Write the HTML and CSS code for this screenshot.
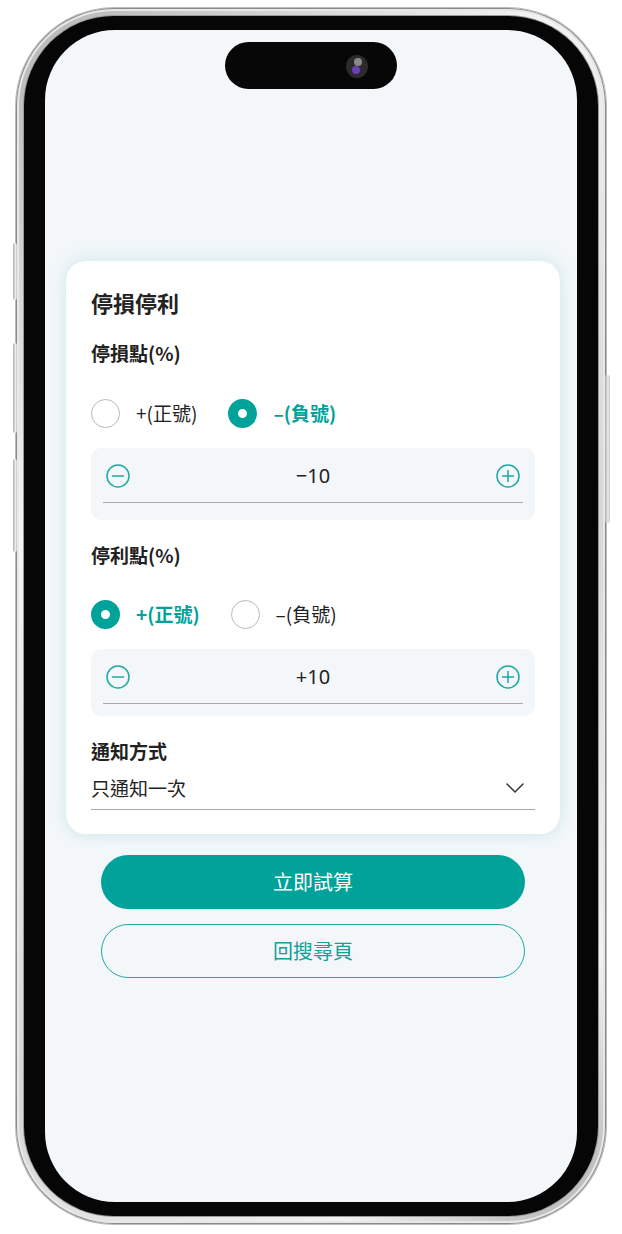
FILE: index.html
```html
<!DOCTYPE html>
<html lang="zh-Hant">
<head>
<meta charset="utf-8">
<title>停損停利</title>
<link rel="stylesheet" href="styles.css">
</head>
<body>
<div class="phone">
  <span class="side-btn side-btn--a"></span>
  <span class="side-btn side-btn--b"></span>
  <span class="side-btn side-btn--c"></span>
  <span class="side-btn side-btn--r"></span>
  <div class="bezel">
    <div class="screen">
      <div class="island"><span class="camera"><i class="cam-a"></i><i class="cam-b"></i></span></div>
      <main class="content">
        <section class="card">
          <h1 class="card-title">停損停利</h1>

          <h2 class="field-label">停損點(%)</h2>
          <div class="radio-group">
            <label class="radio"><span class="radio-dot"></span><span class="radio-text">+(正號)</span></label>
            <label class="radio radio--on"><span class="radio-dot"></span><span class="radio-text">–(負號)</span></label>
          </div>
          <div class="stepper">
            <div class="stepper-row">
              <svg class="step-icon" viewBox="0 0 24 24"><circle cx="12" cy="12" r="11"/><path d="M6.5 12h11"/></svg>
              <span class="step-value">−10</span>
              <svg class="step-icon" viewBox="0 0 24 24"><circle cx="12" cy="12" r="11"/><path d="M6.5 12h11M12 6.5v11"/></svg>
            </div>
          </div>

          <h2 class="field-label field-label--gap">停利點(%)</h2>
          <div class="radio-group">
            <label class="radio radio--on"><span class="radio-dot"></span><span class="radio-text">+(正號)</span></label>
            <label class="radio"><span class="radio-dot"></span><span class="radio-text">–(負號)</span></label>
          </div>
          <div class="stepper stepper--tight">
            <div class="stepper-row">
              <svg class="step-icon" viewBox="0 0 24 24"><circle cx="12" cy="12" r="11"/><path d="M6.5 12h11"/></svg>
              <span class="step-value">+10</span>
              <svg class="step-icon" viewBox="0 0 24 24"><circle cx="12" cy="12" r="11"/><path d="M6.5 12h11M12 6.5v11"/></svg>
            </div>
          </div>

          <h2 class="field-label field-label--gap">通知方式</h2>
          <div class="select">
            <span class="select-text">只通知一次</span>
            <svg class="chevron" viewBox="0 0 18 10"><path d="M1 1l8 8 8-8"/></svg>
          </div>
        </section>

        <div class="actions">
          <button class="btn btn--primary">立即試算</button>
          <button class="btn btn--outline">回搜尋頁</button>
        </div>
      </main>
    </div>
  </div>
</div>
</body>
</html>
```

FILE: styles.css
```css
* { box-sizing: border-box; }

html, body {
  margin: 0;
  padding: 0;
  background: #ffffff;
}

body {
  width: 622px;
  height: 1234px;
  overflow: hidden;
  font-family: "Noto Sans CJK TC", "Noto Sans", sans-serif;
  color: #222222;
}

.phone {
  position: relative;
  margin: 8px 0 0 16px;
  width: 590px;
  height: 1216px;
  padding: 8px;
  border-radius: 98px;
  background: linear-gradient(135deg, #b5b5b5 0%, #f4f4f4 30%, #d6d6d6 60%, #f2f2f2 85%, #b0b0b0 100%);
  box-shadow: inset 0 0 0 1px #8a8a8a, inset 0 0 0 3px #e8e8e8, 0 0 0 1px #bcbcbc;
}

.side-btn {
  position: absolute;
  width: 4px;
  background: linear-gradient(90deg, #a9a9a9, #eeeeee 60%, #c2c2c2);
  border-radius: 2px;
}
.side-btn--a { left: -3px; top: 235px; height: 57px; }
.side-btn--b { left: -3px; top: 335px; height: 90px; }
.side-btn--c { left: -3px; top: 451px; height: 93px; }
.side-btn--r { right: -4px; top: 367px; height: 148px; width: 5px; }

.bezel {
  width: 100%;
  height: 100%;
  padding: 14px 21px;
  border-radius: 90px;
  background: #070606;
  box-shadow: 0 0 0 1px #9a9a9a;
}

.screen {
  position: relative;
  width: 532px;
  height: 1172px;
  border-radius: 70px;
  background: #f3f7fa;
  overflow: hidden;
}

.island {
  position: absolute;
  top: 12px;
  left: 180px;
  width: 172px;
  height: 47px;
  border-radius: 24px;
  background: #070707;
}

.camera {
  position: absolute;
  top: 13px;
  left: 121px;
  width: 22px;
  height: 23px;
  border-radius: 50%;
  background: #2b2b2d;
}
.cam-a, .cam-b {
  position: absolute;
  width: 8px;
  height: 8px;
  border-radius: 50%;
}
.cam-a { top: 3px; left: 8px; background: #8a8a8a; }
.cam-b { top: 11px; left: 6px; background: #6b3fb5; }

.content {
  padding: 231px 17px 0 21px;
}

.card {
  background: #ffffff;
  border-radius: 20px;
  padding: 27px 25px 24px;
  box-shadow: 0 -4px 18px rgba(120, 190, 190, 0.16), 0 4px 14px rgba(120, 190, 190, 0.14);
}

.card-title {
  margin: 0;
  font-size: 22px;
  line-height: 28px;
  font-weight: 700;
  color: #222222;
}

.field-label {
  margin: 23px 0 0;
  font-size: 19px;
  line-height: 28px;
  font-weight: 700;
  color: #222222;
}

.field-label--gap { margin-top: 21px; }

.radio-group {
  display: flex;
  align-items: center;
  gap: 31px;
  margin-top: 31px;
  height: 30px;
}

.field-label--gap + .radio-group { margin-top: 30px; }

.radio {
  display: flex;
  align-items: center;
  gap: 16px;
}

.radio-dot {
  width: 29px;
  height: 29px;
  border-radius: 50%;
  border: 1.5px solid #b9b9b9;
  background: #ffffff;
}

.radio--on .radio-dot {
  border: 10px solid #00a29a;
  background: #ffffff;
}

.radio-text {
  font-size: 19px;
  line-height: 28px;
  color: #222222;
}

.radio--on .radio-text {
  color: #00a29a;
  font-weight: 700;
}

.stepper {
  margin-top: 20px;
  background: #f3f7fa;
  border-radius: 10px;
  padding: 16px 12px 17px;
}

.stepper--tight { padding-bottom: 12px; }

.stepper-row {
  display: flex;
  align-items: center;
  justify-content: space-between;
  height: 39px;
  padding: 0 3px 14px;
  border-bottom: 1px solid #a9a9a9;
}

.step-icon {
  width: 24px;
  height: 24px;
  fill: none;
  stroke: #1fa9a0;
  stroke-width: 1.5;
  stroke-linecap: round;
}

.step-value {
  font-family: "Noto Sans", "Noto Sans CJK TC", sans-serif;
  font-size: 20px;
  line-height: 24px;
  color: #222222;
}

.select {
  display: flex;
  align-items: center;
  justify-content: space-between;
  margin-top: 9px;
  padding: 0 11px 7px 0;
  border-bottom: 1px solid #a9a9a9;
}

.select-text {
  font-size: 19px;
  line-height: 28px;
  color: #222222;
}

.chevron {
  width: 18px;
  height: 10px;
  fill: none;
  stroke: #333333;
  stroke-width: 1.5;
  stroke-linecap: round;
  stroke-linejoin: round;
}

.actions {
  display: flex;
  flex-direction: column;
  gap: 15px;
  margin: 21px 35px 0;
}

.btn {
  height: 54px;
  border-radius: 27px;
  font-family: "Noto Sans CJK TC", "Noto Sans", sans-serif;
  font-size: 20px;
  line-height: 28px;
  cursor: pointer;
}

.btn--primary {
  border: none;
  background: #00a29a;
  color: #ffffff;
}

.btn--outline {
  border: 1.5px solid #1fa9a0;
  background: transparent;
  color: #119f97;
}
```
